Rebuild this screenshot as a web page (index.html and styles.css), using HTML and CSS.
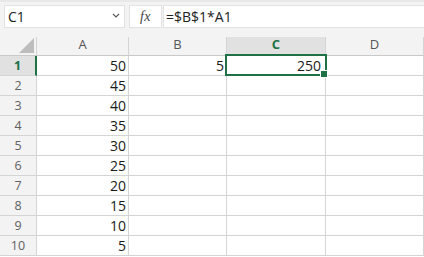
FILE: index.html
```html
<!DOCTYPE html>
<html>
<head>
<meta charset="utf-8">
<link rel="stylesheet" href="styles.css">
</head>
<body>
<div class="toolbar">
  <div class="namebox">
    <span class="name">C1</span>
    <svg class="chev" width="8" height="5" viewBox="0 0 8 5"><path d="M1 1 L4 4 L7 1" fill="none" stroke="#555" stroke-width="1.1"/></svg>
  </div>
  <div class="fxbox"><span class="fx">fx</span></div>
  <div class="formula">=$B$1*A1</div>
</div>
<div class="grid">
  <div class="corner"><span class="tri"></span></div>
  <div class="colhead">A</div>
  <div class="colhead">B</div>
  <div class="colhead sel">C</div>
  <div class="colhead">D</div>

  <div class="rowhead sel">1</div><div class="cell">50</div><div class="cell">5</div><div class="cell active">250</div><div class="cell"></div>
  <div class="rowhead">2</div><div class="cell">45</div><div class="cell"></div><div class="cell"></div><div class="cell"></div>
  <div class="rowhead">3</div><div class="cell">40</div><div class="cell"></div><div class="cell"></div><div class="cell"></div>
  <div class="rowhead">4</div><div class="cell">35</div><div class="cell"></div><div class="cell"></div><div class="cell"></div>
  <div class="rowhead">5</div><div class="cell">30</div><div class="cell"></div><div class="cell"></div><div class="cell"></div>
  <div class="rowhead">6</div><div class="cell">25</div><div class="cell"></div><div class="cell"></div><div class="cell"></div>
  <div class="rowhead">7</div><div class="cell">20</div><div class="cell"></div><div class="cell"></div><div class="cell"></div>
  <div class="rowhead">8</div><div class="cell">15</div><div class="cell"></div><div class="cell"></div><div class="cell"></div>
  <div class="rowhead">9</div><div class="cell">10</div><div class="cell"></div><div class="cell"></div><div class="cell"></div>
  <div class="rowhead">10</div><div class="cell">5</div><div class="cell"></div><div class="cell"></div><div class="cell"></div>
</div>
</body>
</html>
```
FILE: styles.css
```css
* { box-sizing: border-box; }
html, body { margin: 0; padding: 0; background: #ffffff; }
body {
  width: 424px;
  height: 257px;
  overflow: hidden;
  font-family: "Open Sans", "Liberation Sans", sans-serif;
  color: #222;
}
.toolbar {
  height: 37px;
  background: #f3f3f3;
  border-top: 2px solid #e8e8e8;
  display: flex;
  align-items: flex-start;
  padding: 3px 0 0 4px;
  gap: 4px;
}
.namebox {
  width: 121px;
  height: 23px;
  background: #fff;
  border: 1px solid #e2e2e2;
  display: flex;
  align-items: center;
  justify-content: space-between;
  padding: 0 4px 0 3px;
  font-size: 14px;
}
.chev { margin-bottom: 2px; }
.fxbox {
  width: 33px;
  height: 23px;
  background: #fff;
  border: 1px solid #e2e2e2;
  display: flex;
  align-items: center;
  justify-content: center;
}
.fx {
  font-family: "Liberation Serif", "DejaVu Serif", serif;
  font-style: italic;
  font-size: 14px;
  color: #444;
  letter-spacing: 0.5px;
}
.formula {
  flex: 1;
  margin-left: -3px;
  height: 23px;
  background: #fff;
  border: 1px solid #e2e2e2;
  border-right: none;
  font-size: 14px;
  line-height: 21px;
  padding-left: 2px;
}
.grid {
  display: grid;
  grid-template-columns: 37px 92px 98px 99px 98px;
  grid-template-rows: 19px repeat(10, 20px);
}
.corner, .colhead {
  background: #f3f3f3;
  border-right: 1px solid #d4d4d4;
  border-bottom: 1px solid #c9c9c9;
}
.corner { position: relative; }
.tri {
  position: absolute;
  right: 2px;
  bottom: 2px;
  width: 0;
  height: 0;
  border-left: 15px solid transparent;
  border-bottom: 15px solid #bdbdbd;
}
.colhead {
  text-align: center;
  font-size: 13px;
  line-height: 15px;
  color: #555;
}
.colhead.sel {
  background: #e1e1e1;
  color: #1e7145;
  font-weight: 700;
  border-bottom: 2px solid #1e7145;
}
.rowhead {
  background: #f3f3f3;
  border-right: 1px solid #d4d4d4;
  border-bottom: 1px solid #d4d4d4;
  text-align: center;
  font-size: 12.5px;
  line-height: 19px;
  color: #616161;
}
.rowhead.sel {
  background: #e1e1e1;
  color: #1e7145;
  font-weight: 700;
  border-right: 2px solid #1e7145;
}
.cell {
  border-right: 1px solid #d4d4d4;
  border-bottom: 1px solid #d4d4d4;
  text-align: right;
  font-size: 14px;
  line-height: 19px;
  padding-right: 2px;
  color: #1a1a1a;
}
.cell.active { position: relative; padding-right: 4px; }
.cell.active::before {
  content: "";
  position: absolute;
  left: -2px;
  top: -2px;
  right: -2px;
  bottom: -1px;
  border: 2px solid #1e7145;
}
.cell.active::after {
  content: "";
  position: absolute;
  right: -3px;
  bottom: -3px;
  width: 6px;
  height: 6px;
  background: #1e7145;
  border: 1px solid #fff;
}
```
